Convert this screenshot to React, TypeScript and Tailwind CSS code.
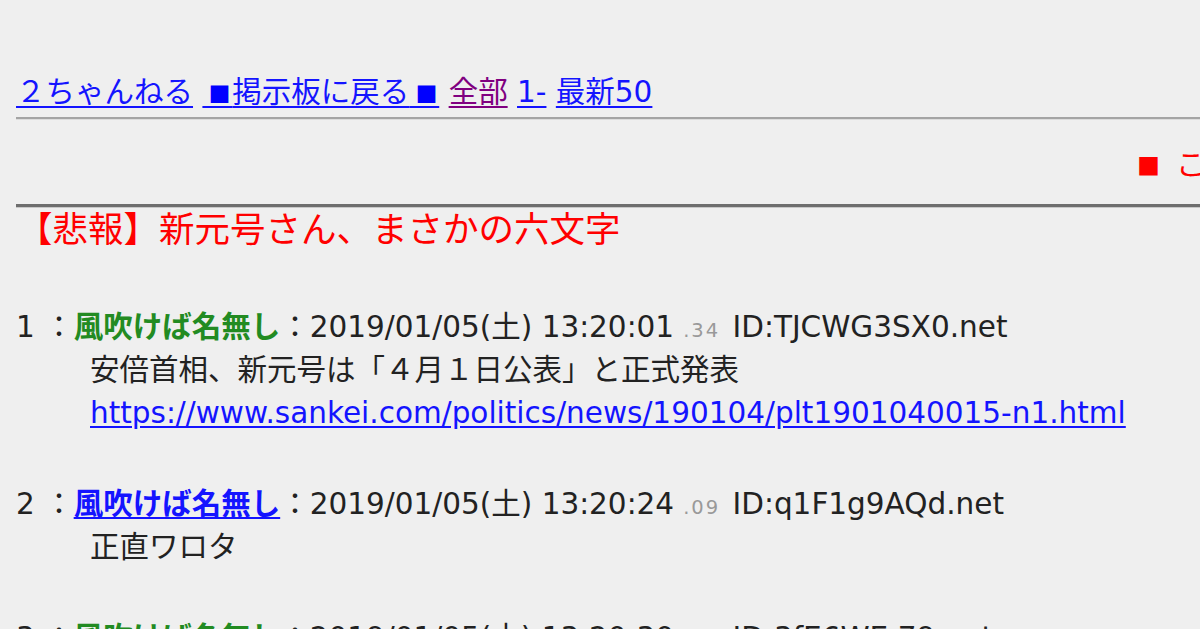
import React from 'react'

const base = { fontFamily: '"DejaVu Sans", "Noto Sans CJK JP", sans-serif' }
const cjk = { fontFamily: '"Noto Sans CJK JP", sans-serif' }

type Post = {
  no: number
  name: string
  mail?: boolean
  date: string
  ms: string
  id: string
  body: React.ReactNode
}

const posts: Post[] = [
  {
    no: 1,
    name: '風吹けば名無し',
    date: '2019/01/05(土) 13:20:01',
    ms: '.34',
    id: 'ID:TJCWG3SX0.net',
    body: (
      <>
        <div>安倍首相、新元号は「４月１日公表」と正式発表</div>
        <div>
          <a href="#" className="text-[#1414ff] underline underline-offset-[3px]">
            https://www.sankei.com/politics/news/190104/plt1901040015-n1.html
          </a>
        </div>
      </>
    ),
  },
  {
    no: 2,
    name: '風吹けば名無し',
    mail: true,
    date: '2019/01/05(土) 13:20:24',
    ms: '.09',
    id: 'ID:q1F1g9AQd.net',
    body: <div>正直ワロタ</div>,
  },
  {
    no: 3,
    name: '風吹けば名無し',
    date: '2019/01/05(土) 13:20:30',
    ms: '.78',
    id: 'ID:3fE6WE 79.net',
    body: <div>草</div>,
  },
]

function PostRow({ p }: { p: Post }) {
  return (
    <div className="mb-[48px]">
      <div className="h-[43px] leading-[43px] whitespace-nowrap">
        <span>{p.no} ：</span>
        {p.mail ? (
          <a href="#" className="font-bold text-[#1414ff] underline underline-offset-[3px]">
            {p.name}
          </a>
        ) : (
          <span className="font-bold text-[#228b22]">{p.name}</span>
        )}
        <span>：{p.date}</span>
        <span className="ml-[9px] mr-[3px] text-[19.5px] tracking-[2px] text-[#999999]">{p.ms}</span>
        <span> {p.id}</span>
      </div>
      <div className="pl-[74px] leading-[43px] whitespace-nowrap">{p.body}</div>
    </div>
  )
}

const NavSq = () => (
  <span style={cjk} className="text-[22px] tracking-[1.75px] text-[#0000ff]">
    {'\u2009■'}
  </span>
)

export default function App() {
  return (
    <div className="h-[629px] overflow-hidden bg-[#efefef] text-[#222]" style={base}>
      <div className="pl-[16px] pt-[72px]">
        <nav className="text-[29.5px] leading-[40px] whitespace-nowrap">
          <a href="#" className="text-[#1414ff] underline underline-offset-[4px]">２ちゃんねる</a>{' '}
          <a href="#" className="text-[#1414ff] underline underline-offset-[4px]">
            <NavSq />掲示板に戻る<NavSq />
          </a>{' '}
          <a href="#" className="text-[#800080] underline underline-offset-[4px]">全部</a>{' '}
          <a href="#" className="text-[#1414ff] underline underline-offset-[4px]">1-</a>{' '}
          <a href="#" className="text-[#1414ff] underline underline-offset-[4px]">最新50</a>
        </nav>
        <div className="mt-[5px] h-[3px] border-t-2 border-[#a4a4a4] border-b border-b-[#dcdcdc]" />
        <div className="h-[84px] pl-[1121px] pt-[25px] text-[29.5px] leading-[40px] text-[#ff0000] whitespace-nowrap">
          <span style={cjk} className="text-[23px] tracking-[6.5px]">■</span> このスレッドは過去ログ倉庫に格納されています
        </div>
        <div className="h-[4px] border-t-[3px] border-[#6e6e6e] border-b border-b-[#c8c8c8]" />
        <h1 className="pl-[1px] text-[35.5px] leading-[44px] text-[#ff0000] whitespace-nowrap">
          【悲報】新元号さん、まさかの六文字
        </h1>
        <div className="mt-[54px] text-[29.5px]">
          {posts.map((p) => (
            <PostRow key={p.no} p={p} />
          ))}
        </div>
      </div>
    </div>
  )
}
